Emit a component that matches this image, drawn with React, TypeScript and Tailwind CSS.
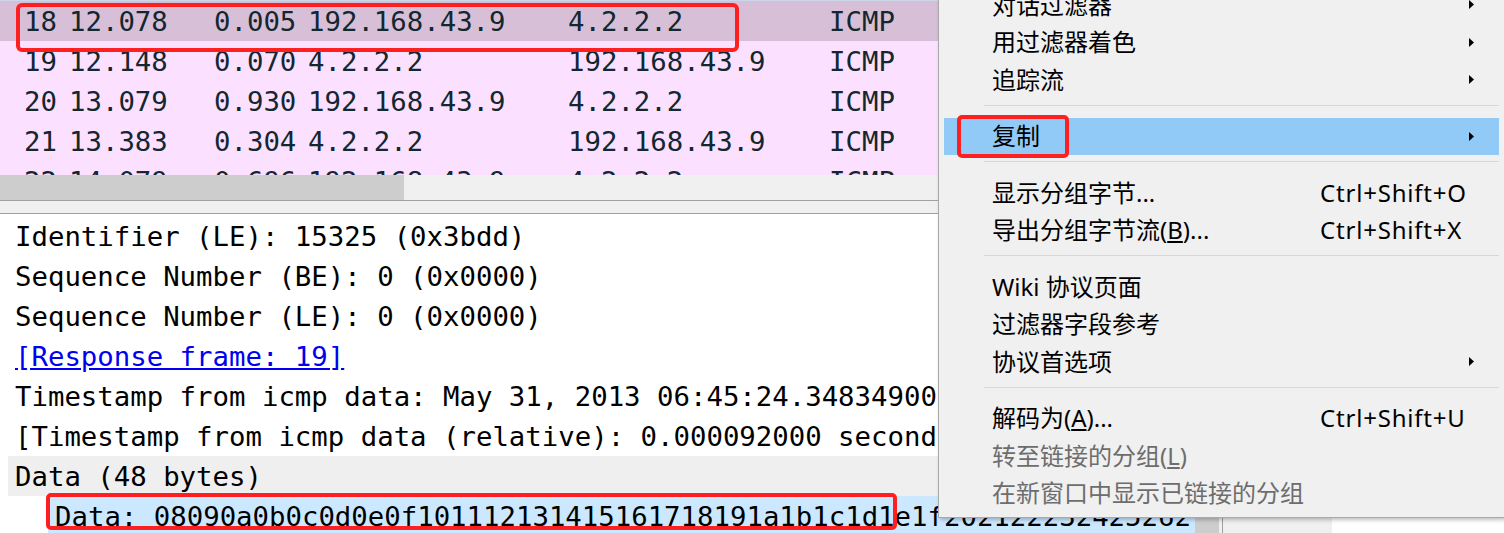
import React from "react";

type Packet = {
  no: number;
  time: string;
  delta: string;
  src: string;
  dst: string;
  proto: string;
  len: string;
  info: string;
};

const packets: Packet[] = [
  { no: 18, time: "12.078", delta: "0.005", src: "192.168.43.9", dst: "4.2.2.2", proto: "ICMP", len: "74", info: "Echo (ping) request" },
  { no: 19, time: "12.148", delta: "0.070", src: "4.2.2.2", dst: "192.168.43.9", proto: "ICMP", len: "74", info: "Echo (ping) reply" },
  { no: 20, time: "13.079", delta: "0.930", src: "192.168.43.9", dst: "4.2.2.2", proto: "ICMP", len: "74", info: "Echo (ping) request" },
  { no: 21, time: "13.383", delta: "0.304", src: "4.2.2.2", dst: "192.168.43.9", proto: "ICMP", len: "74", info: "Echo (ping) reply" },
  { no: 22, time: "14.079", delta: "0.696", src: "192.168.43.9", dst: "4.2.2.2", proto: "ICMP", len: "74", info: "Echo (ping) request" },
];

type MenuEntry =
  | { sep: true }
  | { sep?: false; label: React.ReactNode; shortcut?: string; sub?: boolean; active?: boolean; disabled?: boolean };

const menu: MenuEntry[] = [
  { label: "对话过滤器", sub: true },
  { label: "用过滤器着色", sub: true },
  { label: "追踪流", sub: true },
  { sep: true },
  { label: "复制", sub: true, active: true },
  { sep: true },
  { label: "显示分组字节...", shortcut: "Ctrl+Shift+O" },
  {
    label: (
      <>
        导出分组字节流(<span className="underline">B</span>)...
      </>
    ),
    shortcut: "Ctrl+Shift+X",
  },
  { sep: true },
  { label: "Wiki 协议页面" },
  { label: "过滤器字段参考" },
  { label: "协议首选项", sub: true },
  { sep: true },
  {
    label: (
      <>
        解码为(<span className="underline">A</span>)...
      </>
    ),
    shortcut: "Ctrl+Shift+U",
  },
  {
    label: (
      <>
        转至链接的分组(<span className="underline">L</span>)
      </>
    ),
    disabled: true,
  },
  { label: "在新窗口中显示已链接的分组", disabled: true },
];

const mono = "font-['DejaVu_Sans_Mono',monospace] text-[27.35px] whitespace-nowrap";

function PacketRow({ p, selected }: { p: Packet; selected?: boolean }) {
  return (
    <div
      className={`flex h-[40px] shrink-0 items-center text-[#12272e] ${mono} ${
        selected ? "bg-[#d8bfd8]" : "bg-[#fce0ff]"
      }`}
    >
      <span className="w-[57px] text-right">{p.no}</span>
      <span className="w-[157px] pl-[12px]">{p.time}</span>
      <span className="w-[94px]">{p.delta}</span>
      <span className="w-[260px]">{p.src}</span>
      <span className="w-[261px]">{p.dst}</span>
      <span className="w-[150px]">{p.proto}</span>
      <span className="w-[80px] text-right">{p.len}</span>
      <span className="pl-[16px]">{p.info}</span>
    </div>
  );
}

function Arrow() {
  return (
    <svg width="5" height="9" viewBox="0 0 5 9" className="shrink-0">
      <path d="M0 0 L5 4.5 L0 9 Z" fill="#000" />
    </svg>
  );
}

function ContextMenu() {
  return (
    <div className="absolute left-[938px] top-[-18px] w-[566px] border-l border-b border-[#a9a9a9] bg-[#f0f0f0] pt-[4px] pb-[5px] shadow-[2px_2px_4px_rgba(0,0,0,0.25)] font-['Noto_Sans','Noto_Sans_CJK_SC',sans-serif] text-[24px] leading-none">
      {menu.map((m, i) =>
        m.sep ? (
          <div key={i} className="h-[19px] pt-[6px] pl-[45px] pr-[5px]">
            <div className="h-px bg-[#d7d7d7]" />
          </div>
        ) : (
          <div
            key={i}
            className={`mx-[5px] flex h-[37.5px] items-center pl-[48px] pr-[25px] ${
              m.active ? "bg-[#91c9f7]" : ""
            } ${m.disabled ? "text-[#6d6d6d]" : "text-black"}`}
          >
            <span className="w-[328px] whitespace-nowrap">{m.label}</span>
            <span className="flex-1 whitespace-nowrap tracking-[0.8px]">{m.shortcut}</span>
            {m.sub && <Arrow />}
          </div>
        )
      )}
    </div>
  );
}

export default function App() {
  const data =
    "08090a0b0c0d0e0f101112131415161718191a1b1c1d1e1f202122232425262728292a2b2c2d2e2f3031323334353637";

  return (
    <div className="relative h-[533px] w-[1504px] overflow-hidden bg-white">
      {/* packet list */}
      <div className="flex h-[175px] flex-col overflow-hidden border-t border-[#c9d7e8] bg-[#fce0ff]">
        {packets.map((p) => (
          <PacketRow key={p.no} p={p} selected={p.no === 18} />
        ))}
      </div>

      {/* horizontal scrollbar */}
      <div className="flex h-[25px] bg-[#f0f0f0]">
        <div className="w-[404px] bg-[#cdcdcd]" />
      </div>

      {/* splitter */}
      <div className="h-[14px] border-y border-[#a0a0a0] bg-[#f0f0f0]" />

      {/* packet details */}
      <div className="flex">
        <div className="w-[1195px] overflow-hidden pt-[2px] text-black">
          <div className={`flex h-[40px] items-center pl-[15px] ${mono}`}>Identifier (LE): 15325 (0x3bdd)</div>
          <div className={`flex h-[40px] items-center pl-[15px] ${mono}`}>Sequence Number (BE): 0 (0x0000)</div>
          <div className={`flex h-[40px] items-center pl-[15px] ${mono}`}>Sequence Number (LE): 0 (0x0000)</div>
          <div className={`flex h-[40px] items-center pl-[15px] ${mono}`}>
            <span className="text-[#0000ee] underline">[Response frame: 19]</span>
          </div>
          <div className={`flex h-[40px] items-center pl-[15px] ${mono}`}>
            Timestamp from icmp data: May 31, 2013 06:45:24.348349000 China Standard Time
          </div>
          <div className={`flex h-[40px] items-center pl-[15px] ${mono}`}>
            [Timestamp from icmp data (relative): 0.000092000 seconds]
          </div>
          <div className={`ml-[8px] flex h-[40px] items-center bg-[#efefef] pl-[7px] ${mono}`}>Data (48 bytes)</div>
          <div className={`ml-[48px] flex h-[40px] items-center bg-[#cce8ff] pl-[7px] ${mono}`}>Data: {data}</div>
        </div>
        <div className="mt-[281px] w-[24px] bg-[#cdcdcd]" />
        <div className="w-[3px] bg-[#f0f0f0]" />
        <div className="w-px bg-[#a0a0a0]" />
        <div className="w-[109px] bg-[#f0f0f0]" />
        <div className="flex-1 bg-white" />
      </div>

      <ContextMenu />

      {/* annotations */}
      <div className="absolute left-[16px] top-[3px] h-[49px] w-[723px] rounded-[6px] border-[4px] border-[#fe2020]" />
      <div className="absolute left-[957px] top-[115px] h-[43px] w-[112px] rounded-[5px] border-[4px] border-[#fe2020]" />
      <div className="absolute left-[46px] top-[493px] h-[37px] w-[851px] rounded-[5px] border-[4px] border-[#fe2020]" />
    </div>
  );
}
